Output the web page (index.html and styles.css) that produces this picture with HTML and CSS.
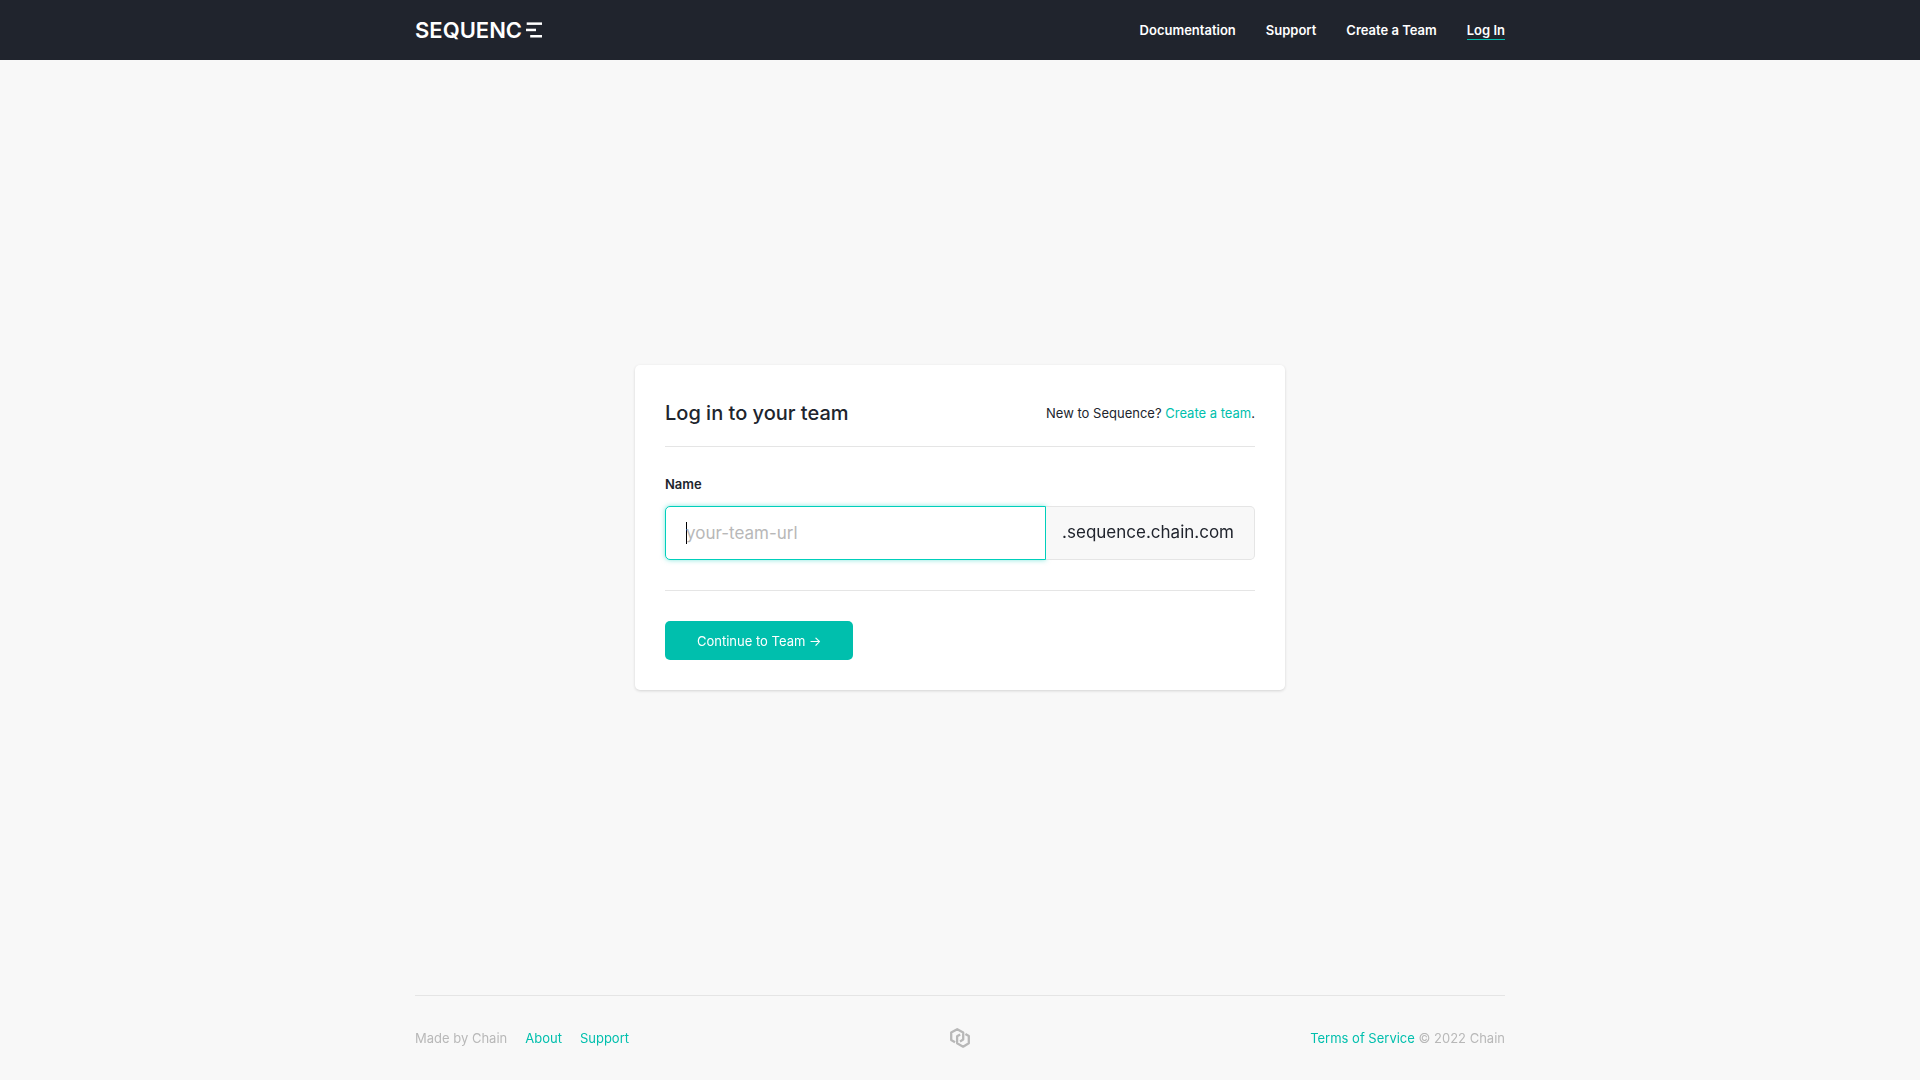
FILE: index.html
```html
<!DOCTYPE html>
<html lang="en">
<head>
<meta charset="utf-8">
<meta name="viewport" content="width=device-width, initial-scale=1">
<title>Log in to your team</title>
<link rel="stylesheet" href="styles.css">
</head>
<body>
<header class="header">
  <div class="container header-row">
    <a class="brand" href="#">
      <span class="brand-name">SEQUENC</span>
      <svg class="brand-bars" width="16" height="16" viewBox="0 0 16 16" fill="#fff" aria-hidden="true">
        <rect x="0.7" y="0.4" width="15.3" height="2.5"/>
        <rect x="0" y="6.7" width="10" height="2.5"/>
        <rect x="4.2" y="13" width="11.8" height="2.5"/>
      </svg>
    </a>
    <nav class="nav">
      <a class="nav-link" href="#">Documentation</a>
      <a class="nav-link" href="#">Support</a>
      <a class="nav-link" href="#">Create a Team</a>
      <a class="nav-link nav-link-active" href="#">Log In</a>
    </nav>
  </div>
</header>
<main class="main">
  <form class="card">
    <div class="card-head">
      <h1 class="title">Log in to your team</h1>
      <p class="hint">New to Sequence? <a class="link" href="#">Create a team</a>.</p>
    </div>
    <div class="card-body">
      <label class="label" for="team">Name</label>
      <div class="field">
        <input class="input" id="team" type="text" placeholder="your-team-url" autocomplete="off" autofocus>
        <span class="suffix">.sequence.chain.com</span>
      </div>
    </div>
    <button class="button" type="submit">Continue to Team →</button>
  </form>
</main>
<footer class="container footer">
  <div class="footer-left">
    <span>Made by Chain</span>
    <a class="link" href="#">About</a>
    <a class="link" href="#">Support</a>
  </div>
  <svg class="mark" width="20" height="20" viewBox="0 0 20 20" fill="none" stroke="#b8b8b8" stroke-width="2.3" stroke-linejoin="round" aria-hidden="true">
    <path d="M5 14.2L1.2 12V4.6L7.2 1.2L13.2 4.6V11.6L10 13.4"/>
    <path d="M10.200 6.400L7.100 8.200V15.300L13.100 18.700L18.800 15.300V8L15.400 5.900"/>
  </svg>
  <div class="footer-right"><a class="link" href="#">Terms of Service</a> © 2022 Chain</div>
</footer>
</body>
</html>
```

FILE: styles.css
```css
* { box-sizing: border-box; }

body {
  margin: 0;
  min-height: 100vh;
  display: flex;
  flex-direction: column;
  background: #f8f8f8;
  color: #20242d;
  font-family: Inter, "Liberation Sans", sans-serif;
  font-size: 13px;
  line-height: 20px;
}

a { text-decoration: none; }

.container {
  width: 100%;
  max-width: 1130px;
  margin: 0 auto;
  padding: 0 20px;
}

.header { background: #20242d; }

.header-row {
  min-height: 60px;
  display: flex;
  align-items: center;
  justify-content: space-between;
}

.brand {
  display: flex;
  align-items: center;
  gap: 4px;
  color: #fff;
}

.brand-name {
  font-size: 22px;
  font-weight: 600;
}

.nav { display: flex; gap: 30px; }

.nav-link {
  color: #fff;
  font-weight: 600;
  line-height: 18px;
  border-bottom: 1px solid transparent;
}

.nav-link-active { border-color: #00bfad; }

.main {
  flex: 1;
  display: flex;
  align-items: center;
  justify-content: center;
  padding: 20px;
}

.card {
  width: 100%;
  max-width: 650px;
  padding: 30px;
  background: #fff;
  border-radius: 5px;
  box-shadow: 0 1px 3px rgba(0, 0, 0, 0.15);
}

.card-head {
  display: flex;
  align-items: center;
  justify-content: space-between;
  padding: 3px 0 18px;
  border-bottom: 1px solid #e5e5e5;
}

.title {
  margin: 0;
  font-size: 20px;
  line-height: 30px;
  font-weight: 500;
}

.hint { margin: 0; }

.link { color: #00bfad; }

.card-body {
  padding: 27px 0 30px;
  margin-bottom: 30px;
  border-bottom: 1px solid #e5e5e5;
}

.label {
  display: block;
  margin-bottom: 12px;
  font-weight: 600;
}

.field { display: flex; height: 54px; }

.input {
  flex: 1;
  min-width: 0;
  padding: 0 20px;
  border: 1px solid #e5e5e5;
  border-radius: 5px 0 0 5px;
  background: #fff;
  color: #20242d;
  font: inherit;
  font-size: 17px;
  outline: none;
}

.input::placeholder { color: #b8b8b8; }

.input:focus {
  border-color: #00cfbb;
  box-shadow: 0 0 5px rgba(0, 207, 187, 0.5);
}

/* steady caret while the field is empty */
.input:focus:placeholder-shown {
  caret-color: transparent;
  background: #fff linear-gradient(#000, #000) 20px 15px / 1px 22px no-repeat;
}

.suffix {
  display: flex;
  align-items: center;
  padding: 0 20px 2px 16px;
  border: 1px solid #e5e5e5;
  border-left: 0;
  border-radius: 0 5px 5px 0;
  background: #f8f8f8;
  font-size: 17px;
}

.button {
  display: block;
  height: 39px;
  padding: 0 32px;
  border: 0;
  border-radius: 5px;
  background: #00bfad;
  color: #fff;
  font: inherit;
}

.footer {
  display: grid;
  grid-template-columns: 1fr auto 1fr;
  align-items: center;
  min-height: 85px;
  padding: 0;
  max-width: 1090px;
  border-top: 1px solid #e5e5e5;
  color: #b8b8b8;
}

.footer-left { display: flex; gap: 18px; }
.footer-right { text-align: right; }
```
